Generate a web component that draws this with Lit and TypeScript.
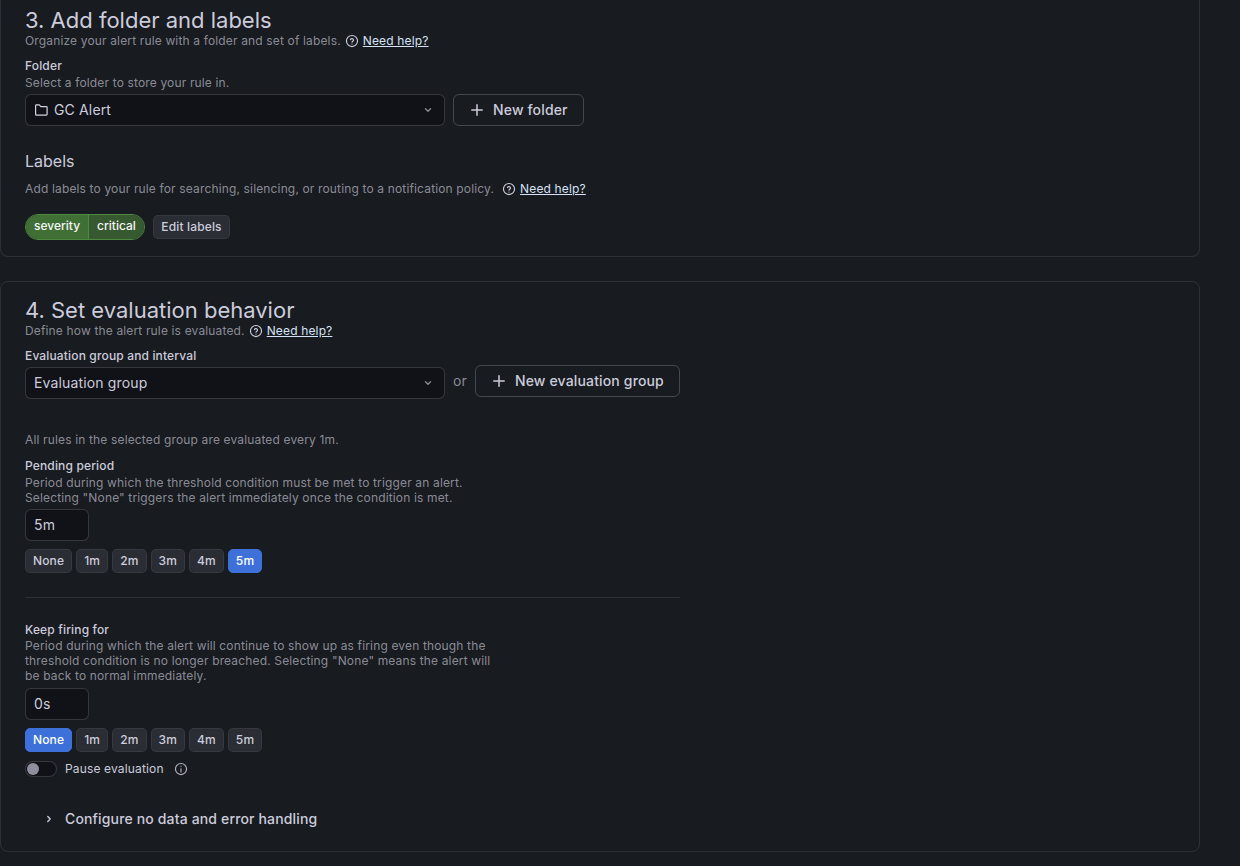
import { LitElement, html, css, svg } from 'lit';
import { customElement } from 'lit/decorators.js';
import { classMap } from 'lit/directives/class-map.js';

const helpIcon = html`<svg class="ico" viewBox="0 0 24 24" width="14" height="14" fill="none" stroke="currentColor" stroke-width="2" stroke-linecap="round">
  <circle cx="12" cy="12" r="9.5"></circle>
  <path d="M9.4 9.6a2.7 2.7 0 0 1 5.2.9c0 1.8-2.6 2.2-2.6 3.6"></path>
  <path d="M12 17.2v.1"></path>
</svg>`;

const infoIcon = html`<svg class="ico" viewBox="0 0 24 24" width="14" height="14" fill="none" stroke="currentColor" stroke-width="2" stroke-linecap="round">
  <circle cx="12" cy="12" r="9.5"></circle>
  <path d="M12 11.5v5.5"></path>
  <path d="M12 7.6v.1"></path>
</svg>`;

const chevronDown = html`<svg class="chev" viewBox="0 0 16 16" width="16" height="16" fill="none" stroke="currentColor" stroke-width="1.4" stroke-linecap="round" stroke-linejoin="round">
  <path d="M5.5 6.8 8 9.2l2.5-2.4"></path>
</svg>`;

const plusIcon = svg`<path d="M8 2.8v10.4M2.8 8h10.4"></path>`;

@customElement('app-root')
export class AppRoot extends LitElement {
  static styles = css`
    :host {
      display: block;
      height: 866px;
      overflow: hidden;
      background: #181b1f;
      color: #ccccdc;
      font-family: Inter, 'Noto Sans', sans-serif;
      font-size: 12px;
      line-height: 16px;
      letter-spacing: 0.15px;
    }
    .page {
      width: 1200px;
      display: flex;
      flex-direction: column;
      gap: 24px;
    }
    .card {
      box-sizing: border-box;
      border: 1px solid rgba(204, 204, 220, 0.12);
      border-radius: 8px;
      padding: 16px 24px;
    }
    .card.cut {
      height: 257px;
      padding-top: 8px;
      border-top: none;
      border-top-left-radius: 0;
      border-top-right-radius: 0;
    }
    .card.full {
      height: 571px;
    }
    h2 {
      margin: 0;
      font-size: 22px;
      line-height: 25px;
      font-weight: 400;
      letter-spacing: 0;
      color: #ccccdc;
    }
    h3 {
      margin: 24px 0 0;
      font-size: 16px;
      line-height: 22px;
      font-weight: 400;
      letter-spacing: 0;
    }
    .desc {
      color: rgba(204, 204, 220, 0.65);
    }
    .desc.tight {
      line-height: 15px;
    }
    .help {
      display: flex;
      align-items: center;
      height: 16px;
    }
    .help .ico {
      margin-left: 4px;
      margin-right: 4px;
      color: #ccccdc;
    }
    .help.wide {
      margin-top: 9px;
    }
    .help.wide .ico {
      margin-left: 8px;
    }
    .help a {
      color: #d6e2f5;
      text-decoration: underline;
    }
    .label {
      margin-top: 9px;
      font-weight: 500;
      color: #ccccdc;
    }
    .label.pending {
      margin-top: 10px;
      margin-bottom: 1px;
    }
    .label.firing {
      margin-top: 24px;
    }
    .select-hint {
      margin-top: 1px;
    }
    .row {
      display: flex;
      align-items: flex-start;
      margin-top: 3px;
    }
    .row.gap {
      gap: 8px;
    }
    .row.tags {
      align-items: center;
      gap: 8px;
      margin-top: 17px;
    }
    .select {
      width: 420px;
      height: 32px;
      box-sizing: border-box;
      display: flex;
      align-items: center;
      background: #111217;
      border: 1px solid rgba(204, 204, 220, 0.2);
      border-radius: 6px;
      padding: 0 8px;
      font-size: 14px;
    }
    .select .grow {
      flex: 1;
    }
    .select .folder {
      margin-right: 4px;
      color: #d4d4e0;
    }
    .chev {
      color: rgba(204, 204, 220, 0.65);
    }
    .btn {
      height: 32px;
      box-sizing: border-box;
      display: flex;
      align-items: center;
      gap: 8px;
      padding: 0 15px;
      border: 1px solid rgba(204, 204, 220, 0.25);
      border-radius: 6px;
      font-size: 14px;
      font-weight: 500;
      color: #ccccdc;
    }
    .raised {
      margin-top: -2px;
    }
    .pill {
      display: flex;
      height: 26px;
      box-sizing: border-box;
      border: 1px solid #4d8a3f;
      border-radius: 13px;
      overflow: hidden;
      color: #f4f5f5;
      font-weight: 500;
      letter-spacing: 0;
    }
    .pill span {
      display: flex;
      align-items: center;
      padding: 0 8px 2px;
      background: #3f6f35;
    }
    .pill span + span {
      background: #37592f;
      border-left: 1px solid #4d8a3f;
    }
    .small-btn {
      display: flex;
      align-items: center;
      height: 24px;
      box-sizing: border-box;
      padding: 0 7px;
      background: #2a2d33;
      border: 1px solid rgba(204, 204, 220, 0.08);
      border-radius: 5px;
      font-weight: 500;
      color: #ccccdc;
    }
    .small-btn.edit {
      padding: 0 7.5px;
    }
    .small-btn.active {
      background: #3d71d9;
      border-color: #3d71d9;
      color: #fff;
    }
    .chips {
      display: flex;
      gap: 4px;
      margin-top: 8px;
    }
    .short {
      width: 64px;
      height: 32px;
      box-sizing: border-box;
      display: flex;
      align-items: center;
      margin-top: 4px;
      padding: 0 8px;
      background: #111217;
      border: 1px solid rgba(204, 204, 220, 0.2);
      border-radius: 6px;
      font-size: 14px;
    }
    .short.after-long {
      margin-top: 5px;
    }
    .hr {
      height: 1px;
      width: 655px;
      margin-top: 24px;
      background: rgba(204, 204, 220, 0.12);
    }
    .or {
      font-size: 14px;
      line-height: 28px;
      margin: 0 8px;
      color: rgba(204, 204, 220, 0.65);
    }
    .note {
      margin-top: 33px;
    }
    .toggle {
      display: flex;
      align-items: center;
      height: 16px;
      margin-top: 9px;
    }
    .switch {
      width: 32px;
      height: 16px;
      box-sizing: border-box;
      display: flex;
      align-items: center;
      padding-left: 1px;
      background: #111217;
      border: 1px solid rgba(204, 204, 220, 0.2);
      border-radius: 8px;
      margin-right: 8px;
    }
    .knob {
      width: 12px;
      height: 12px;
      border-radius: 50%;
      background: #8e8e9c;
    }
    .toggle .ico {
      margin-left: 10px;
      color: rgba(204, 204, 220, 0.85);
    }
    .collapse {
      display: flex;
      align-items: center;
      margin-top: 32px;
      padding-left: 16px;
      font-size: 14px;
      font-weight: 500;
      line-height: 20px;
    }
    .collapse svg {
      margin-right: 8px;
    }
  `;

  private chips(active: string) {
    const opts = ['None', '1m', '2m', '3m', '4m', '5m'];
    return html`<div class="chips">
      ${opts.map((o) => html`<div class=${classMap({ 'small-btn': true, active: o === active })}>${o}</div>`)}
    </div>`;
  }

  private plus(label: string) {
    return html`<div class="btn">
      <svg viewBox="0 0 16 16" width="16" height="16" fill="none" stroke="currentColor" stroke-width="1.5" stroke-linecap="round">${plusIcon}</svg>
      ${label}
    </div>`;
  }

  render() {
    return html`
      <div class="page">
        <section class="card cut">
          <h2>3. Add folder and labels</h2>
          <div class="desc help">Organize your alert rule with a folder and set of labels. ${helpIcon}<a>Need help?</a></div>
          <div class="label">Folder</div>
          <div class="desc select-hint">Select a folder to store your rule in.</div>
          <div class="row gap">
            <div class="select">
              <svg class="folder" viewBox="0 0 16 16" width="16" height="16" fill="none" stroke="currentColor" stroke-width="1.2" stroke-linejoin="round">
                <path d="M1.6 12.2V3.7c0-.5.3-.8.8-.8h2.9l1.5 1.7h5.5c.5 0 .8.3.8.8v6.9c0 .5-.3.8-.8.8H2.4c-.5 0-.8-.4-.8-.9z"></path>
              </svg>
              <span class="grow">GC Alert</span>
              ${chevronDown}
            </div>
            ${this.plus('New folder')}
          </div>
          <h3>Labels</h3>
          <div class="desc help wide">Add labels to your rule for searching, silencing, or routing to a notification policy. ${helpIcon}<a>Need help?</a></div>
          <div class="row tags">
            <div class="pill"><span>severity</span><span>critical</span></div>
            <div class="small-btn edit">Edit labels</div>
          </div>
        </section>

        <section class="card full">
          <h2>4. Set evaluation behavior</h2>
          <div class="desc help">Define how the alert rule is evaluated. ${helpIcon}<a>Need help?</a></div>
          <div class="label">Evaluation group and interval</div>
          <div class="row">
            <div class="select"><span class="grow">Evaluation group</span>${chevronDown}</div>
            <span class="or">or</span>
            <div class="raised">${this.plus('New evaluation group')}</div>
          </div>
          <div class="desc note">All rules in the selected group are evaluated every 1m.</div>
          <div class="label pending">Pending period</div>
          <div class="desc tight">Period during which the threshold condition must be met to trigger an alert.<br />Selecting "None" triggers the alert immediately once the condition is met.</div>
          <div class="short">5m</div>
          ${this.chips('5m')}
          <div class="hr"></div>
          <div class="label firing">Keep firing for</div>
          <div class="desc tight">Period during which the alert will continue to show up as firing even though the<br />threshold condition is no longer breached. Selecting "None" means the alert will<br />be back to normal immediately.</div>
          <div class="short after-long">0s</div>
          ${this.chips('None')}
          <div class="toggle">
            <div class="switch"><div class="knob"></div></div>
            Pause evaluation ${infoIcon}
          </div>
          <div class="collapse">
            <svg viewBox="0 0 16 16" width="16" height="16" fill="none" stroke="currentColor" stroke-width="1.4" stroke-linecap="round" stroke-linejoin="round"><path d="M6.8 5.5 9.2 8l-2.4 2.5"></path></svg>
            Configure no data and error handling
          </div>
        </section>
      </div>
    `;
  }
}
